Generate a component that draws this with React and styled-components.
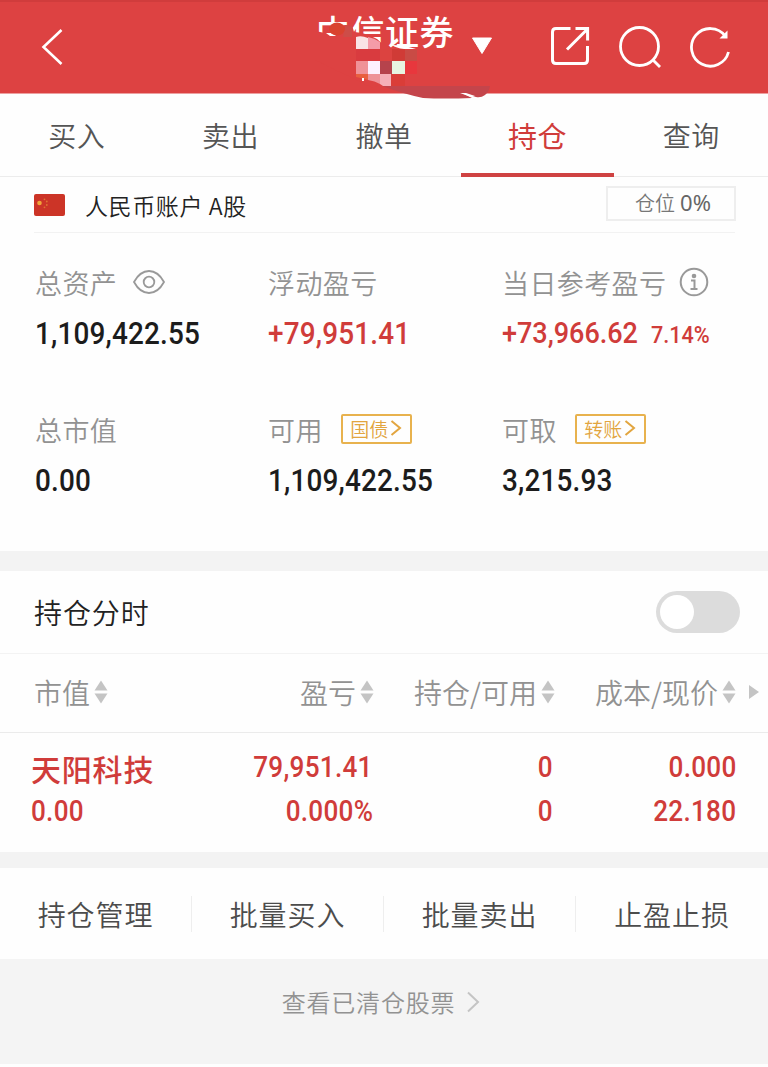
import React, { useState } from "react";
import styled, { createGlobalStyle } from "styled-components";

const tabs = ["买入", "卖出", "撤单", "持仓", "查询"];

const columns = ["市值", "盈亏", "持仓/可用", "成本/现价"];

const holdings = [
  {
    name: "天阳科技",
    value: "0.00",
    profit: "79,951.41",
    percent: "0.000%",
    held: "0",
    available: "0",
    cost: "0.000",
    price: "22.180",
  },
];

const actions = ["持仓管理", "批量买入", "批量卖出", "止盈止损"];

function TitleSmudge() {
  return (
    <Smudge width="200" height="100" viewBox="0 0 200 100">
      <path d="M16 31 L26 33 L34 27 L46 25 H53 L55 32 Q68 33 78 39 L88 48 L118 49 V62 L74 88 L16 60 Z" fill="#dd4242" />
      <path d="M46 25 Q50 25 53 27 V37 H44 Z" fill="#cd4d48" />
      <path d="M27 33 L34 33 L37 36 L31 36 Z" fill="#fff" />
      <ellipse cx="38" cy="29" rx="8" ry="6.500" fill="#d9432f" />
      <path d="M57 37 Q62 35 69 38 V49 H57 Z" fill="#f9e4e6" />
      <path d="M69 37 Q75 38 81 42 V49 H69 Z" fill="#f49ca8" />
      <path d="M57 49 H81 V61 H57 Z" fill="#d93b3f" />
      <path d="M81 49 H93 V61 H81 Z" fill="#dc4340" />
      <path d="M93 49 H106 V61 H93 Z" fill="#d03b36" />
      <path d="M106 50 H118 V61 H106 Z" fill="#c94b45" />
      <path d="M93 45 Q104 45 117 49 L105 49 Q97 48 93 45 Z" fill="#fff" />
      <path d="M57 61 H69 V74 H57 Z" fill="#f09298" />
      <path d="M69 61 H81 V74 H69 Z" fill="#fdf0ff" />
      <path d="M81 61 H93 V74 H81 Z" fill="#b6434c" />
      <path d="M93 61 H106 V74 H93 Z" fill="#e7f4e1" />
      <path d="M106 61 H118 V74 H106 Z" fill="#e8373d" />
      <path d="M57 74 H69 V80 Q63 78 57 77 Z" fill="#e9603f" />
      <path d="M63 78 H65 V81 H63 Z" fill="#fff" />
      <path d="M69 74 H81 V84 Q76 81 69 80 Z" fill="#ee9299" />
      <path d="M81 74 H92 V86 H84 L81 84 Z" fill="#f6b0b8" />
      <path d="M92 74 H106 V86 H92 Z" fill="#da3d38" />
      <path d="M83 86 H191 Q190 92 186 95 Q182 98 177 97 L163 93 L173 98 Q145 99 124 98 Q105 94 83 86 Z" fill="#c4454b" />
      <path d="M161 93 H167 L176 96 L172 97 Z" fill="#fff" />
    </Smudge>
  );
}

function SortIcon() {
  return (
    <svg width="14" height="24" viewBox="0 0 14 24" fill="#c4c4c4">
      <path d="M7 0.5 L13.5 10.5 H0.5 Z" />
      <path d="M7 23.5 L13.5 13.5 H0.5 Z" />
    </svg>
  );
}

function TagArrow() {
  return (
    <svg width="12" height="18" viewBox="0 0 12 18" fill="none" stroke="#e2a53f" strokeWidth="2">
      <path d="M1.5 2 L10 9 L1.5 16" />
    </svg>
  );
}

function App() {
  const [tab, setTab] = useState("持仓");
  const [intraday, setIntraday] = useState(false);

  return (
    <Page>
      <GlobalStyle />
      <Header>
        <BackButton aria-label="back">
          <svg width="24" height="40" viewBox="0 0 24 40" fill="none" stroke="#fff" strokeWidth="2.6">
            <path d="M21.500 3 L3.500 20 L21.500 37" />
          </svg>
        </BackButton>
        <Title>中信证券</Title>
        <Caret width="22" height="18" viewBox="0 0 22 18">
          <path d="M1.5 1 H20.5 L11 16.5 Z" fill="#fff" stroke="#fff" strokeLinejoin="round" />
        </Caret>
        <HeaderIcons>
          <svg width="40" height="40" viewBox="0 0 40 40" fill="none" stroke="#fff" strokeWidth="3">
            <path d="M20.500 2.500 H6 Q2.500 2.500 2.500 6 V34 Q2.500 37.500 6 37.500 H34 Q37.500 37.500 37.500 34 V20" />
            <path d="M17 23.500 L37 3.500 M25.500 2.500 H37.600 V14.500" />
          </svg>
          <svg width="42" height="42" viewBox="0 0 42 42" fill="none" stroke="#fff" strokeWidth="2.8">
            <circle cx="20.500" cy="20.500" r="19" />
            <path d="M33.500 33.500 L41 41" />
          </svg>
          <svg width="40" height="42" viewBox="0 0 40 42" fill="none" stroke="#fff" strokeWidth="2.8">
            <path d="M38.500 26 A18.800 18.800 0 1 1 35.300 10" />
            <path d="M37.500 4.500 V12.500 H29.500 Z" fill="#fff" stroke="none" />
          </svg>
        </HeaderIcons>
        <TitleSmudge />
      </Header>

      <Tabs>
        {tabs.map((name) => (
          <Tab key={name} $active={name === tab} onClick={() => setTab(name)}>
            {name}
          </Tab>
        ))}
      </Tabs>

      <Account>
        <svg width="31" height="22" viewBox="0 0 31 22">
          <rect width="31" height="22" rx="2" fill="#cc3427" />
          <circle cx="5.500" cy="9" r="2.300" fill="#f0a53a" />
          <g fill="#de7434">
            <circle cx="10.500" cy="5.300" r="0.900" />
            <circle cx="12.800" cy="7.500" r="0.900" />
            <circle cx="12.800" cy="11" r="0.900" />
            <circle cx="10.500" cy="13.300" r="0.900" />
          </g>
        </svg>
        <AccountName>人民币账户 A股</AccountName>
        <Position>
          仓位 <b>0%</b>
        </Position>
      </Account>

      <Assets>
        <Asset>
          <Label>
            总资产
            <svg width="32" height="24" viewBox="0 0 32 24" fill="none" stroke="#999" strokeWidth="1.800">
              <path d="M1 12 Q7 1 16 1 Q25 1 31 12 Q25 23 16 23 Q7 23 1 12 Z" />
              <circle cx="16" cy="12" r="5.300" />
            </svg>
          </Label>
          <Amount>
            <Figure>1,109,422.55</Figure>
          </Amount>
        </Asset>
        <Asset>
          <Label>浮动盈亏</Label>
          <Amount $up>
            <Figure>+79,951.41</Figure>
          </Amount>
        </Asset>
        <Asset>
          <Label $gap="13px">
            当日参考盈亏
            <svg width="30" height="30" viewBox="0 0 30 30" fill="none" stroke="#999" strokeWidth="2">
              <circle cx="15" cy="15" r="13.300" />
              <circle cx="15" cy="9" r="2.300" fill="#999" stroke="none" />
              <path d="M12 13.500 H15.500 V22 M11.500 22 H18.500" />
            </svg>
          </Label>
          <Amount $up>
            <DayFigure>+73,966.62</DayFigure>
            <Percent>7.14%</Percent>
          </Amount>
        </Asset>
        <Asset>
          <Label>总市值</Label>
          <Amount>
            <Figure>0.00</Figure>
          </Amount>
        </Asset>
        <Asset>
          <Label $gap="18px">
            可用
            <Tag>
              国债
              <TagArrow />
            </Tag>
          </Label>
          <Amount>
            <Figure>1,109,422.55</Figure>
          </Amount>
        </Asset>
        <Asset>
          <Label $gap="18px">
            可取
            <Tag>
              转账
              <TagArrow />
            </Tag>
          </Label>
          <Amount>
            <Figure>3,215.93</Figure>
          </Amount>
        </Asset>
      </Assets>

      <Intraday>
        持仓分时
        <Switch role="switch" aria-checked={intraday} $on={intraday} onClick={() => setIntraday(!intraday)}>
          <Knob />
        </Switch>
      </Intraday>

      <TableHead>
        {columns.map((name) => (
          <HeadCell key={name}>
            {name}
            <SortIcon />
          </HeadCell>
        ))}
        <svg width="10" height="14" viewBox="0 0 10 14" fill="#c4c4c4">
          <path d="M0 0 L10 7 L0 14 Z" />
        </svg>
      </TableHead>

      {holdings.map((item) => (
        <Holding key={item.name}>
          <Cell>
            <StockName>{item.name}</StockName>
            <Num>{item.value}</Num>
          </Cell>
          <Cell $right>
            <Num>{item.profit}</Num>
            <Num>{item.percent}</Num>
          </Cell>
          <Cell $right>
            <Num>{item.held}</Num>
            <Num>{item.available}</Num>
          </Cell>
          <Cell $right>
            <Num>{item.cost}</Num>
            <Num>{item.price}</Num>
          </Cell>
        </Holding>
      ))}

      <Actions>
        {actions.map((name) => (
          <Action key={name}>{name}</Action>
        ))}
      </Actions>

      <ClearedLink>
        查看已清仓股票
        <svg width="14" height="22" viewBox="0 0 14 22" fill="none" stroke="#c4c4c4" strokeWidth="2">
          <path d="M2 1.500 L12 11 L2 20.500" />
        </svg>
      </ClearedLink>
    </Page>
  );
}

const GlobalStyle = createGlobalStyle`
  body {
    margin: 0;
    background: #fff;
  }

  * {
    box-sizing: border-box;
  }

  button {
    border: none;
    background: none;
    padding: 0;
    margin: 0;
    font: inherit;
    letter-spacing: inherit;
    color: inherit;
  }

  svg {
    display: block;
    flex: none;
  }
`;

const Page = styled.div`
  width: 768px;
  height: 1067px;
  overflow: hidden;
  background: #fefefe;
  font-family: "Noto Sans CJK SC", sans-serif;
  font-weight: 350;
  white-space: nowrap;
`;

const Header = styled.header`
  position: relative;
  display: flex;
  height: 94px;
  background: #dd4242;
  border-top: 2px solid #d03c3c;
  border-bottom: 1px solid #eda0a0;
`;

const BackButton = styled.button`
  align-self: flex-start;
  margin: 25px 0 0 40px;
`;

const Title = styled.h1`
  margin: 7px 0 0 252px;
  font-size: 34px;
  line-height: 44px;
  letter-spacing: 0.5px;
  font-weight: 500;
  color: #fff;
`;

const Caret = styled.svg`
  margin: 35px 0 0 17px;
`;

const HeaderIcons = styled.div`
  display: flex;
  align-items: flex-start;
  gap: 29px;
  margin: 24px 38px 0 auto;
`;

/* scribble and pixel blocks that hide part of the title */
const Smudge = styled.svg`
  position: absolute;
  left: 299px;
  top: -2px;
`;

const Tabs = styled.nav`
  display: flex;
  height: 83px;
  border-bottom: 1px solid #ececec;
`;

const Tab = styled.button`
  flex: 1;
  margin-bottom: -1px;
  padding-top: 2px;
  border-bottom: 4px solid ${(p) => (p.$active ? "#cf4242" : "transparent")};
  font-size: ${(p) => (p.$active ? "29px" : "28px")};
  letter-spacing: 0.5px;
  font-weight: ${(p) => (p.$active ? 400 : 350)};
  color: ${(p) => (p.$active ? "#d03c3a" : "#555")};
`;

const Account = styled.div`
  display: flex;
  align-items: center;
  height: 56px;
  margin: 0 33px 0 34px;
  border-bottom: 1px solid #f2f2f2;
`;

const AccountName = styled.span`
  margin-left: 20px;
  font-size: 23px;
  letter-spacing: 0.6px;
  color: #222;
`;

const Position = styled.span`
  display: flex;
  align-items: center;
  justify-content: center;
  gap: 5px;
  width: 130px;
  height: 35px;
  margin: -3px -1px 0 auto;
  padding: 0 0 2px 4px;
  border: 2px solid #eee;
  font-size: 20px;
  color: #777;

  b {
    font-family: "Noto Sans", sans-serif;
    font-size: 22px;
    font-weight: 400;
    color: #666;
  }
`;

const Assets = styled.section`
  display: grid;
  grid-template-columns: 233px 234px 1fr;
  grid-auto-rows: 147px;
  height: 318px;
  padding: 31px 0 0 35px;
`;

const Asset = styled.div`
  display: flex;
  flex-direction: column;
`;

const Label = styled.div`
  display: flex;
  align-items: center;
  gap: ${(p) => p.$gap || "16px"};
  height: 36px;
  font-size: 27px;
  letter-spacing: 0.4px;
  color: #929292;
`;

const Amount = styled.div`
  display: flex;
  align-items: baseline;
  height: 36px;
  margin-top: 16px;
  line-height: 36px;
  color: ${(p) => (p.$up ? "#d03c3a" : "#1c1c1c")};
`;

const Figure = styled.span`
  font-family: Roboto, sans-serif;
  font-size: 31px;
  font-weight: 500;
  letter-spacing: 0.2px;
  transform: scaleX(0.9);
  transform-origin: left;
`;

const DayFigure = styled(Figure)`
  font-size: 30px;
  line-height: 33px;
  letter-spacing: 0;
`;

const Percent = styled(Figure)`
  margin-left: -2px;
  font-size: 24px;
  line-height: 30px;
  letter-spacing: 0;
`;

const Tag = styled.span`
  display: flex;
  align-items: center;
  justify-content: center;
  gap: 2px;
  width: 71px;
  height: 30px;
  padding-bottom: 2px;
  border: 2px solid #e8b24e;
  border-radius: 2px;
  font-size: 19px;
  letter-spacing: 0;
  color: #e2a53f;
`;

const Intraday = styled.section`
  display: flex;
  align-items: center;
  justify-content: space-between;
  height: 103px;
  padding: 0 28px 0 34px;
  border-top: 20px solid #f3f3f3;
  border-bottom: 1px solid #f3f3f3;
  font-size: 28px;
  letter-spacing: 0.9px;
  color: #222;
`;

const Switch = styled.button`
  display: flex;
  align-items: center;
  justify-content: ${(p) => (p.$on ? "flex-end" : "flex-start")};
  width: 84px;
  height: 42px;
  padding: 4px;
  border-radius: 21px;
  background: ${(p) => (p.$on ? "#d03c3a" : "#dcdcdc")};
`;

const Knob = styled.span`
  width: 34px;
  height: 34px;
  border-radius: 50%;
  background: #fff;
`;

const TableHead = styled.div`
  display: grid;
  grid-template-columns: 160px 180px 181px 181px 1fr;
  align-items: center;
  height: 79px;
  padding: 0 0 2px 34px;
  border-bottom: 1px solid #ebebeb;
  font-size: 28px;
  color: #929292;

  > svg {
    margin: 0 0 0 13px;
  }
`;

const HeadCell = styled.div`
  display: flex;
  align-items: center;
  justify-content: flex-end;
  gap: 4px;

  &:first-child {
    justify-content: flex-start;
  }
`;

const Holding = styled.div`
  display: grid;
  grid-template-columns: 160px 182px 180px 183px;
  height: 119px;
  padding: 12px 0 0 31px;
  color: #d03c3a;
`;

const Cell = styled.div`
  display: flex;
  flex-direction: column;
  align-items: ${(p) => (p.$right ? "flex-end" : "flex-start")};
  --origin: ${(p) => (p.$right ? "right" : "left")};
`;

const StockName = styled.div`
  height: 44px;
  font-size: 30px;
  line-height: 46px;
  letter-spacing: 0.8px;
  font-weight: 500;
`;

const Num = styled.div`
  height: 44px;
  font-family: Roboto, sans-serif;
  font-size: 29px;
  line-height: 44px;
  font-weight: 500;
  letter-spacing: 0.3px;
  transform: scaleX(0.9);
  transform-origin: var(--origin);
`;

const Actions = styled.div`
  display: flex;
  align-items: center;
  height: 107px;
  border-top: 16px solid #f3f3f3;
`;

const Action = styled.button`
  width: 192px;
  height: 36px;
  font-size: 28px;
  line-height: 36px;
  letter-spacing: 0.9px;
  color: #4c4c4c;
  border-right: 1px solid #eee;

  &:last-child {
    border-right: none;
  }
`;

const ClearedLink = styled.div`
  display: flex;
  align-items: center;
  justify-content: center;
  gap: 11px;
  height: 105px;
  padding: 0 6px 20px 0;
  background: #f4f4f4;
  font-size: 24px;
  letter-spacing: 0.8px;
  color: #929292;
`;

export default App;
